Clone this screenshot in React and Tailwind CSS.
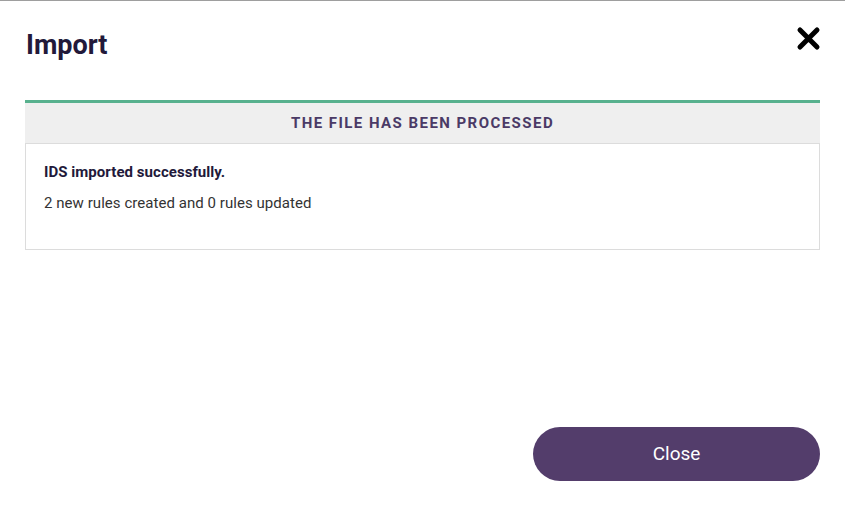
import React from 'react'

const App = () => {
    return (
        <div className="w-[845px] h-[505px] bg-white border-t border-[#9e9e9e] font-['Roboto',sans-serif] text-[#2a1f3d] flex flex-col px-[25px]">
            <div className="flex items-start justify-between pt-[27px]">
                <h1 className="text-[27px] font-bold leading-[34px] text-[#22193a] pl-[1px]">Import</h1>
                <button className="mt-[-2px] mr-[-1px]" aria-label="close">
                    <svg width="25" height="25" viewBox="0 0 25 25">
                        <path d="M4 4 L21 21 M21 4 L4 21" stroke="#000" strokeWidth="5" strokeLinecap="round" />
                    </svg>
                </button>
            </div>
            <div className="mt-[38px] border-t-[3px] border-[#58b18e]">
                <div className="bg-[#efefef] h-[40px] flex items-center justify-center">
                    <p className="text-[15px] font-bold tracking-[1.45px] text-[#4a3a66]">THE FILE HAS BEEN PROCESSED</p>
                </div>
                <div className="border border-[#dcdcdc] h-[107px] px-[18px] pt-[18px]">
                    <p className="text-[15px] font-bold text-[#22193a] leading-[20px] tracking-[0.05px]">IDS imported successfully.</p>
                    <p className="text-[15px] text-[#333] leading-[20px] mt-[11px] tracking-[0.05px]">2 new rules created and 0 rules updated</p>
                </div>
            </div>
            <div className="flex-1 flex items-end justify-end pb-[24px]">
                <button className="w-[287px] h-[54px] rounded-full bg-[#533d6b] text-white text-[19px]">Close</button>
            </div>
        </div>
    )
}

export default App
